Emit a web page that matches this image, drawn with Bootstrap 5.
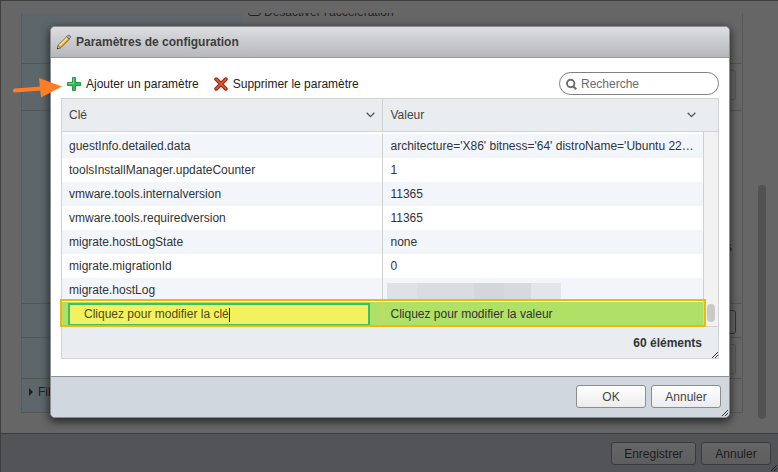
<!DOCTYPE html>
<html lang="fr">
<head>
<meta charset="utf-8">
<meta name="viewport" content="width=device-width, initial-scale=1">
<title>Paramètres de configuration</title>
<link rel="stylesheet" href="https://cdn.jsdelivr.net/npm/bootstrap@5.3.0/dist/css/bootstrap.min.css">
<style>
body { font: 12px/16px "Liberation Sans", Arial, sans-serif; color: #333; background: #666; }
.page-shell { border-top: 1px solid #404040; border-left: 1px solid #404040; }
.page-main { padding: 12px 12px 12px 20px; gap: 15px; }
.settings { border-right: 1px solid #575757; color: #222; }
.setting { border-bottom: 1px solid #555; }
.setting-name { width: 221px; background: #5d666a; border-left: 1px solid #565b5e; padding: 5px 6px; }
.setting-field { padding: 6px; }
.h-a { height: 51px; } .h-b { height: 47px; } .h-c { height: 193px; }
.h-d { height: 34px; } .h-e { height: 41px; } .h-f { height: 34px; }
.clip-line { margin-top: -9px; gap: 3px; }
.clip-line input { width: 13px; height: 12px; margin: 0; appearance: none; border: 1px solid #222; border-radius: 3px; background: #666; }
.clip-line label { line-height: 16px; }
.dim-box { border: 1px solid #555; border-radius: 3px; background: transparent; color: #222; height: 30px; appearance: none; }
.dim-dark { border-color: #333; height: 24px; }
.unit { padding-right: 4px; }
.page-scroll { width: 8px; border-radius: 4px; background: #525252; margin: 172px 0 2px; }
.page-foot { height: 39px; background: #535457; border-top: 1px solid #3c3c3c; padding: 8px 7px; gap: 5px; }
.ui-btn { font-size: 12px; line-height: 16px; height: 23px; min-width: 70px; padding: 0 6px; border: 1px solid #8c8c8c; border-radius: 3px; color: #444; background: linear-gradient(#fff, #ececec); }
.ui-btn-dim { border-color: #3a3a3a; color: #1c1c1c; background: linear-gradient(#666, #5d5d5d); }
.ui-btn-wide { min-width: 85px; }
.window { top: 25px; left: 49px; right: 48px; background: #fff; border: 1px solid #8b8d90; border-radius: 5px; box-shadow: 0 3px 9px 1px rgba(0,0,0,.6); }
.window-head { height: 31px; padding: 0 5px; gap: 4px; background: linear-gradient(#dddee1, #b6b7bb); border-bottom: 1px solid #97989b; border-radius: 4px 4px 0 0; }
.window-title { font-size: 12px; line-height: 16px; color: #3c3c3c; }
.window-body { padding: 14px 10px 17px; }
.window-foot { height: 41px; padding: 8px; gap: 5px; background: #d0d7df; border-top: 1px solid #8f9296; border-radius: 0 0 4px 4px; }
.tools { padding-left: 6px; gap: 15px; margin-bottom: 3px; }
.tool-btn { font-size: 12px; line-height: 16px; height: 20px; color: #222; gap: 5px; }
.search-box { width: 160px; height: 23px; border: 1px solid #808080; border-radius: 12px; padding: 0 6px; gap: 4px; }
.search-box input { font-size: 12px; line-height: 16px; color: #333; min-width: 0; outline: 0; }
.search-box input::placeholder { color: #6a6a6a; opacity: 1; }
.params { table-layout: fixed; border-collapse: separate; border-spacing: 0; border: 1px solid #d3d3d3; }
.col-bar { width: 15px; }
.params th { height: 33px; padding: 0 7px; font-weight: 400; background: #e9edf0; border-bottom: 1px solid #d3d3d3; color: #444; }
.params th + th { border-left: 1px solid #d0d0d0; padding-right: 22px; }
.params td { height: 24px; padding: 0 7px; }
.params tbody tr:first-child td { height: 26px; border-top: 2px solid #fff; }
.params tbody tr:nth-child(odd) td { background: #f2f6fb; }
.params td + td { border-left: 1px solid #d0d0d0; }
.params tbody tr:first-child td.bar-cell { padding: 0 3px; background: #f2f2f2; border-top: 0; vertical-align: bottom; }
.bar-thumb { width: 8px; height: 18px; border-radius: 4px; background: #c9c9c9; margin-bottom: 4px; }
.masked { width: 174px; height: 17px; margin: 3px 0 0 -3px; background: linear-gradient(90deg, #dfe2e5 17%, #d9dddf 17% 33%, #dadddf 33% 50%, #d4d6d9 50% 67%, #d7dadd 67% 83%, #e3e6e8 83%); }
.params tr.is-edit td { background: #b0e066; }
.params tr.is-edit td + td { border-left-color: #d4d35b; }
.params tr.is-edit td:first-child { padding: 0 12px 0 6px; }
.edit-mark { left: -1px; right: 13px; bottom: 32px; height: 28px; border: 2px solid #e9b914; pointer-events: none; }
.key-input { height: 23px; border: 2px solid #3abf62; background: #f3f160; color: #4c4c10; padding: 0 14px; font-size: 12px; line-height: 16px; outline: 0; }
.text-caret { left: 161px; top: 5px; width: 1px; height: 14px; background: #222; }
.params tfoot td { height: 32px; background: #e9edf0; border-top: 1px solid #d3d3d3; padding-right: 16px; color: #333; }
.grip { right: 1px; bottom: 1px; }
.pointer-arrow { left: 12px; top: 76px; }
</style>
<script src="https://cdn.jsdelivr.net/npm/bootstrap@5.3.0/dist/js/bootstrap.bundle.min.js"></script>
</head>
<body>
<div class="page-shell position-relative d-flex flex-column min-vh-100">
  <main class="page-main d-flex flex-grow-1">
    <div class="settings flex-grow-1 align-self-start">
      <div class="setting d-flex h-a">
        <div class="setting-name"></div>
        <div class="setting-field flex-grow-1 pt-0 overflow-hidden">
          <div class="clip-line d-flex align-items-start"><input type="checkbox" id="accel"><label for="accel">Désactiver l'accélération</label></div>
        </div>
      </div>
      <div class="setting d-flex h-b"><div class="setting-name"></div><div class="setting-field flex-grow-1"><select class="dim-box w-100" aria-label="Option"></select></div></div>
      <div class="setting d-flex h-c"><div class="setting-name"></div><div class="setting-field flex-grow-1 d-flex align-items-end justify-content-end pb-5"><span class="unit">s</span></div></div>
      <div class="setting d-flex h-d"><div class="setting-name"></div><div class="setting-field flex-grow-1"><input class="dim-box dim-dark w-100" type="text" aria-label="Paramètres"></div></div>
      <div class="setting d-flex h-e"><div class="setting-name"></div><div class="setting-field flex-grow-1"><select class="dim-box w-100" aria-label="Latence"></select></div></div>
      <div class="setting d-flex h-f"><div class="setting-name d-flex gap-1"><svg width="6" height="8" viewBox="0 0 6 8" class="mt-1"><path d="M1 0l4 4-4 4z" fill="#1c1c1c"/></svg><span>Fibre</span></div></div>
    </div>
    <div class="page-scroll"></div>
  </main>
  <footer class="page-foot d-flex justify-content-end position-relative">
    <button class="ui-btn ui-btn-dim ui-btn-wide" type="button">Enregistrer</button>
    <button class="ui-btn ui-btn-dim" type="button">Annuler</button>
    <svg class="grip position-absolute" width="6" height="6" viewBox="0 0 6 6"><path d="M0 6L6 0M3 6l3-3" stroke="#222" fill="none"/></svg>
  </footer>

  <section class="window position-absolute" role="dialog" aria-labelledby="dlg-title">
    <header class="window-head d-flex align-items-center">
      <svg width="16" height="16" viewBox="0 0 16 16"><path d="M1.5 14.5l1-3.5L11 2.5l2.5 2.500L5 13.500z" fill="#f2b632" stroke="#6b4a1c" stroke-width=".9"/><path d="M3.500 11.500L12 3" stroke="#ffe9a0" stroke-width="1.2"/><path d="M1.200 14.800l.9-3.200 2.400 2.300z" fill="#f6dfb8" stroke="#5a3c17" stroke-width=".6"/><path d="M1 15l.5-1.600 1.100 1.100z" fill="#222"/><path d="M10.800 2.700l1.400-1.400q.8-.6 1.800.4t.5 1.800l-1.400 1.600z" fill="#a9b0c0" stroke="#55555c" stroke-width=".8"/></svg>
      <h1 id="dlg-title" class="window-title fw-bold m-0">Paramètres de configuration</h1>
    </header>
    <div class="window-body">
      <div class="tools d-flex align-items-center">
        <button class="tool-btn btn p-0 border-0 d-flex align-items-center" type="button"><svg width="14" height="14" viewBox="0 0 14 14"><path d="M5.500.5h3v5h5v3h-5v5h-3v-5h-5v-3h5z" fill="#38b95c" stroke="#239a43" stroke-linejoin="round"/><path d="M6.500 1.500v5h-5" stroke="#7bd894" fill="none"/></svg>Ajouter un paramètre</button>
        <button class="tool-btn btn p-0 border-0 d-flex align-items-center" type="button"><svg width="14" height="14" viewBox="0 0 14 14"><path d="M2.200 2.200l9.600 9.600M11.800 2.200l-9.600 9.600" stroke="#98251b" stroke-width="3.800" stroke-linecap="round"/><path d="M2.200 2.200l9.600 9.600M11.800 2.200l-9.600 9.600" stroke="#e3622e" stroke-width="1.600" stroke-linecap="round"/></svg>Supprimer le paramètre</button>
        <label class="search-box d-flex align-items-center ms-auto"><svg class="flex-shrink-0" width="11" height="12" viewBox="0 0 11 12"><circle cx="4.700" cy="5.500" r="3.700" fill="none" stroke="#6d6d6d" stroke-width="1.900"/><path d="M7.200 8.200l3 3" stroke="#6d6d6d" stroke-width="2.200"/></svg><input class="border-0 bg-transparent p-0 flex-grow-1" type="search" placeholder="Recherche" aria-label="Recherche"></label>
      </div>
      <div class="position-relative">
        <table class="params w-100">
          <colgroup><col><col><col class="col-bar"></colgroup>
          <thead>
            <tr>
              <th scope="col"><div class="d-flex align-items-center justify-content-between"><span>Clé</span><svg width="9" height="6" viewBox="0 0 9 6"><path d="M.7.8l3.800 3.800L8.300.8" fill="none" stroke="#555" stroke-width="1.300"/></svg></div></th>
              <th scope="col" colspan="2"><div class="d-flex align-items-center justify-content-between"><span>Valeur</span><svg width="9" height="6" viewBox="0 0 9 6"><path d="M.7.8l3.800 3.800L8.300.8" fill="none" stroke="#555" stroke-width="1.300"/></svg></div></th>
            </tr>
          </thead>
          <tbody>
            <tr><td>guestInfo.detailed.data</td><td class="text-truncate">architecture='X86' bitness='64' distroName='Ubuntu 22.04.3 LTS'</td><td class="bar-cell" rowspan="8"><div class="bar-thumb"></div></td></tr>
            <tr><td>toolsInstallManager.updateCounter</td><td>1</td></tr>
            <tr><td>vmware.tools.internalversion</td><td>11365</td></tr>
            <tr><td>vmware.tools.requiredversion</td><td>11365</td></tr>
            <tr><td>migrate.hostLogState</td><td>none</td></tr>
            <tr><td>migrate.migrationId</td><td>0</td></tr>
            <tr><td>migrate.hostLog</td><td><div class="masked"></div></td></tr>
            <tr class="is-edit"><td><div class="position-relative"><input class="key-input d-block w-100" type="text" value="Cliquez pour modifier la clé" aria-label="Clé"><span class="text-caret position-absolute"></span></div></td><td>Cliquez pour modifier la valeur</td></tr>
          </tbody>
          <tfoot><tr><td class="text-end fw-bold" colspan="3">60 éléments</td></tr></tfoot>
        </table>
        <div class="edit-mark position-absolute"></div>
        <svg class="grip position-absolute" width="6" height="6" viewBox="0 0 6 6"><path d="M0 6L6 0M3 6l3-3" stroke="#333" fill="none"/></svg>
      </div>
    </div>
    <footer class="window-foot d-flex justify-content-end position-relative">
      <button class="ui-btn" type="button">OK</button>
      <button class="ui-btn" type="button">Annuler</button>
      <svg class="grip position-absolute" width="6" height="6" viewBox="0 0 6 6"><path d="M0 6L6 0M3 6l3-3" stroke="#333" fill="none"/></svg>
    </footer>
  </section>

  <svg class="pointer-arrow position-absolute" width="50" height="22" viewBox="0 0 50 22"><path d="M2 13.500L28 11.500" stroke="#fd7e26" stroke-width="4" stroke-linecap="round"/><path d="M26 1l23 8.500L28 20.500z" fill="#fd7e26"/></svg>
</div>
</body>
</html>
